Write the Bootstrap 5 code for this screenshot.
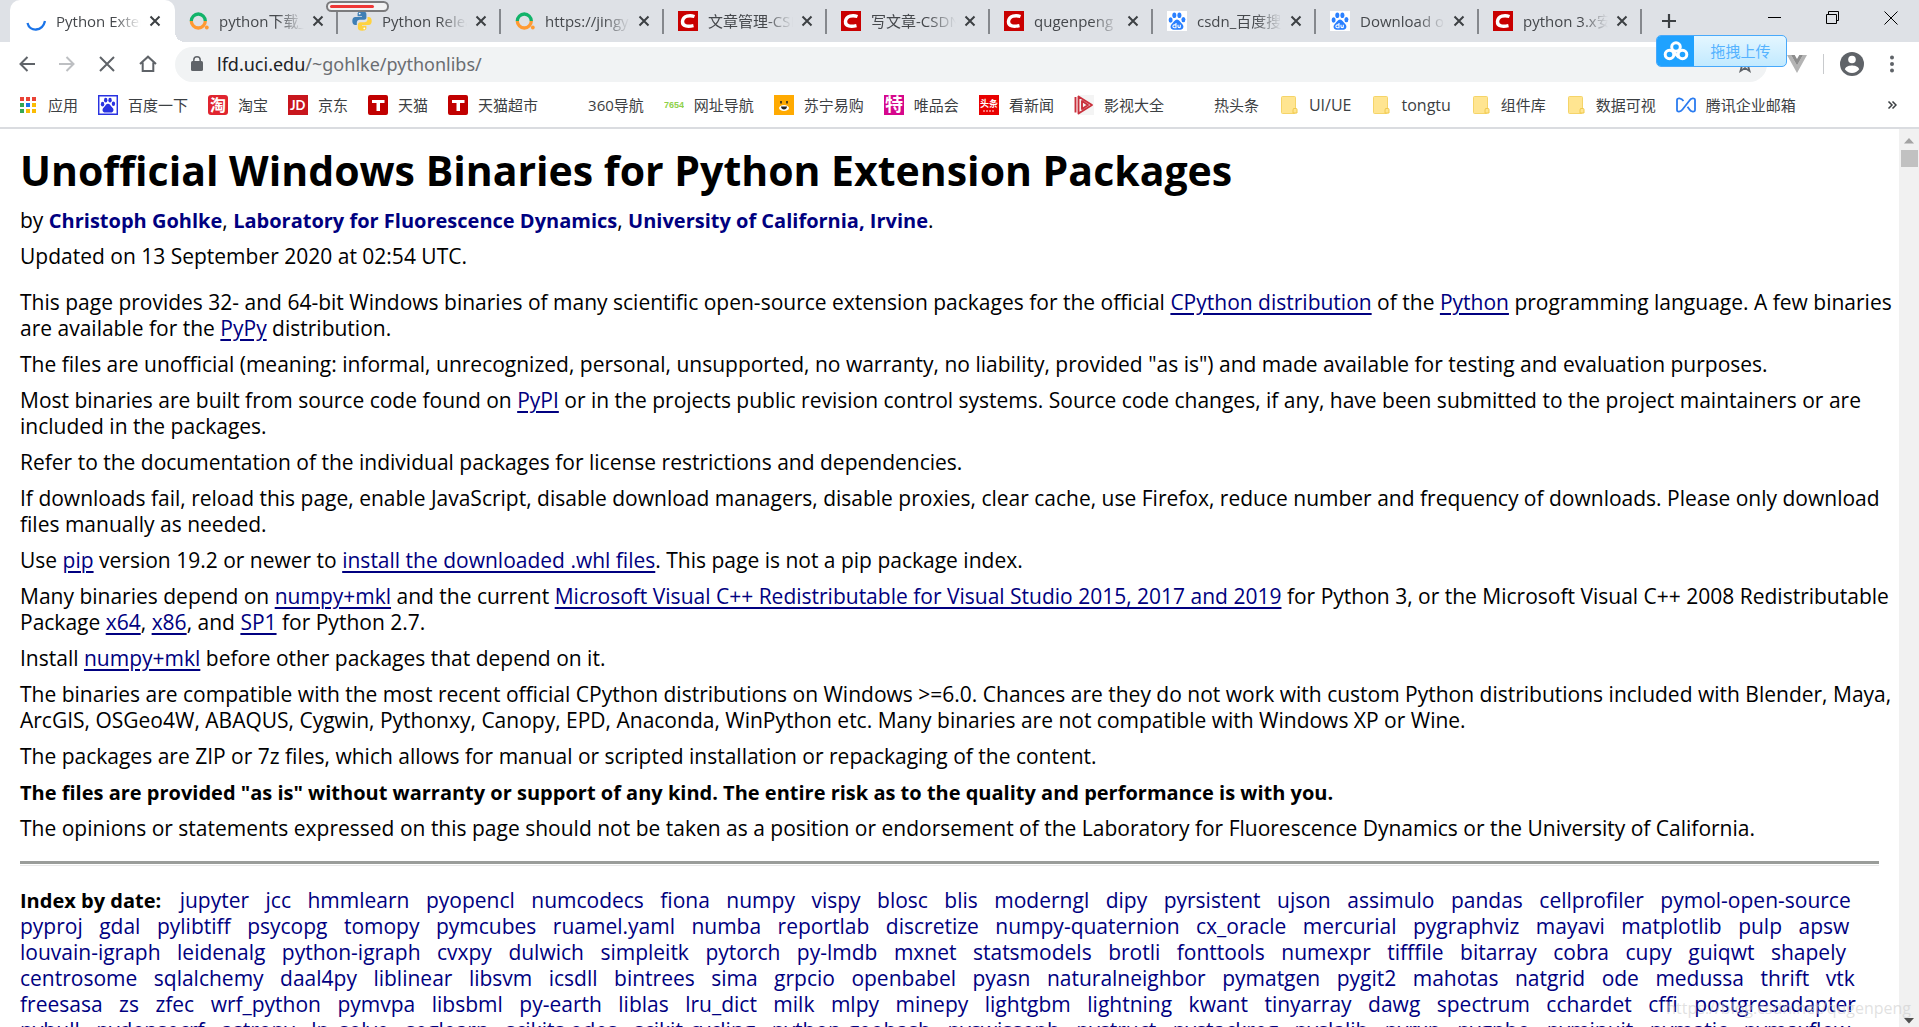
<!DOCTYPE html>
<html lang="en">
<head>
<meta charset="utf-8">
<meta name="viewport" content="width=device-width, initial-scale=1">
<title>Python Extension Packages for Windows - Christoph Gohlke</title>
<link href="https://cdn.jsdelivr.net/npm/bootstrap@5.3.0/dist/css/bootstrap.min.css" rel="stylesheet">
<style>
  body { font-family: "Open Sans", "Noto Sans CJK SC", sans-serif; color: #000; background: #fff; }
  svg { display: block; flex: none; }
  button { border: 0; background: none; padding: 0; color: inherit; }

  /* tab strip */
  .tabstrip { height: 42px; background: #dee1e6; padding-left: 10px; font-size: 15px; color: #45484c; }
  .tabset { flex: 0 1 1632px; min-width: 0; }
  .btab { flex: 1 1 0; min-width: 0; height: 42px; padding: 0 14px 0 14px; position: relative; }
  .btab .ttl { flex: 1 1 0; min-width: 0; margin: 0 8px 0 10px; white-space: nowrap; overflow: hidden; color: inherit; text-decoration: none;
    -webkit-mask-image: linear-gradient(90deg, #000 68%, transparent); mask-image: linear-gradient(90deg, #000 68%, transparent); }
  .btab + .btab::after { content: ""; width: 2px; height: 25px; background: #85888d; position: absolute; right: 0; top: 9px; }
  .btab.current { flex: 0 0 165px; background: #fff; border-radius: 10px 10px 0 0; padding-left: 16px; }
  .btab.current::after { content: ""; position: absolute; left: 100%; bottom: 0; width: 10px; height: 10px; background: radial-gradient(circle at 10px 0, transparent 10px, #fff 10px); }
  .newtab { flex: none; width: 54px; height: 42px; }
  .winctl { gap: 44px; padding: 0 21px 6px 0; }

  /* address bar */
  .toolbar { height: 45px; padding: 0 23px 1px 19px; }
  .navbtns { gap: 24px; width: 156px; }
  .omni { height: 35px; background: #f1f3f4; border-radius: 18px; padding: 0 12px 0 16px; font: 18px "Noto Sans", sans-serif; color: #6a6d71; }
  .omni b { font-weight: 400; color: #202124; }
  .omni .lockgap { margin-right: 14px; }
  .toolsep { width: 1px; height: 20px; background: #c8cacd; }

  /* bookmarks */
  .marks { height: 42px; border-bottom: 2px solid #dadce0; padding: 0 22px 4px 18px; gap: 20px; font-size: 15px; line-height: 20px; }
  .marks a { color: #3c4043; text-decoration: none; white-space: nowrap; gap: 10px; }
  .marks .latin { font-size: 16px; }
  .blankico { width: 20px; height: 20px; }

  /* document */
  .doc { padding: 14px 20px 0; font-size: 21px; line-height: 26px; white-space: nowrap; overflow: hidden; }
  .doc h1 { font-size: 41px; line-height: 54px; font-weight: 700; margin: 0 0 10px; }
  .doc p { margin: 0 0 10px; }
  .doc a { color: #000080; text-decoration-thickness: 2px; text-underline-offset: 3px; }
  .doc strong, .doc .byline a { font-size: 20px; font-weight: 700; line-height: 20px; }
  .byline a, .pkgs a { text-decoration: none; }
  .doc .stamp { margin-bottom: 20px; }
  .rule { height: 4px; margin: 20px 0 22px; border: solid #9a9d9a; border-width: 3px 0 0; opacity: 1; box-shadow: 0 1px #e8e8e8; }
  .pkgs a { margin-right: 11px; }
  .pkgs strong { margin-right: 13px; }

  /* scrollbar */
  .sbar { flex: 0 0 20px; background: #f1f1f1; padding: 9px 0 3px; }
  .sbar .thumb { width: 17px; height: 17px; background: #c1c1c1; margin-top: 6px; }

  /* overlays */
  .dropup { position: absolute; left: 1656px; top: 35px; width: 131px; height: 32px; border: 1px solid #48a9fb; border-radius: 5px; background: linear-gradient(#e4f6ff, #c2eaff); color: #55b3ff; font-size: 15px; overflow: hidden; }
  .dropup span { flex: 1; text-align: center; padding-left: 1px; }
  .dropup i { width: 37px; height: 32px; background: #1fa2ff; }
  .meter { position: absolute; left: 326px; top: 1px; width: 63px; height: 11px; border: 2px solid #7b7b7d; border-radius: 6px; background: #f2f2f3; padding: 2px; }
  .meter div { width: 44px; height: 3px; border-radius: 2px; background: #ee3636; }
  .wmark { position: absolute; right: 8px; bottom: 6px; font: 16px/26px "Open Sans", sans-serif; color: rgba(205, 205, 205, .6); }
</style>
<script src="https://cdn.jsdelivr.net/npm/bootstrap@5.3.0/dist/js/bootstrap.bundle.min.js"></script>
</head>
<body class="vh-100 d-flex flex-column overflow-hidden position-relative">

<svg width="0" height="0" class="position-absolute" aria-hidden="true">
  <symbol id="x" viewBox="0 0 12 12"><path d="M1.500 1.500 10.500 10.500M10.500 1.500 1.500 10.500" stroke="#3c4043" stroke-width="2" fill="none"/></symbol>
  <symbol id="csdn" viewBox="0 0 20 20"><path fill="#c90000" d="M0 0h20v20H0z"/><path d="M16.500 5.500C12 4 5 4.500 4.500 10.500 4.200 15.500 10 15.800 15.500 14.600" fill="none" stroke="#fff" stroke-width="3.400"/></symbol>
  <symbol id="paw" viewBox="0 0 20 20"><ellipse cx="3.600" cy="9" rx="2" ry="2.700"/><ellipse cx="7.300" cy="4.300" rx="2" ry="2.800"/><ellipse cx="12.400" cy="4.300" rx="2" ry="2.800"/><ellipse cx="16.400" cy="8.600" rx="2" ry="2.700"/><path d="M10 8.500c2.300 0 3 2.500 5 4.300 2.600 2.300 1.400 5.900-1.600 5.900H6.600c-3 0-4.200-3.600-1.600-5.900 2-1.800 2.700-4.300 5-4.300z"/></symbol>
  <symbol id="baidu" viewBox="0 0 20 20"><path fill="#fff" d="M0 0h20v20H0z"/><use href="#paw" fill="#2a80ff"/><path d="M9 12v4.800H7.300a1.400 1.400 0 0 1 0-2.900H9M11 13.800v1.800c0 1.300 2.300 1.300 2.300 0v-1.800 3" fill="none" stroke="#fff" stroke-width="1.100"/></symbol>
  <symbol id="ring" viewBox="0 0 20 20"><path d="M2.300 10a7 7 0 1 1 14 0" fill="none" stroke="#12b36a" stroke-width="3.300"/><path d="M2.300 10a7 7 0 0 0 14 0" fill="none" stroke="#ff9a32" stroke-width="3.300"/><circle cx="17.800" cy="16.500" r="1.900" fill="#ff9a32"/></symbol>
  <symbol id="tmall" viewBox="0 0 20 20"><rect width="20" height="20" rx="2" fill="#c10000"/><path d="M4 5h12.500v3H12v8H8.500V8H4z" fill="#fff"/></symbol>
  <symbol id="folder" viewBox="0 0 20 20"><rect x="2.500" y="1.500" width="14" height="17" rx="1" fill="#ffe591" stroke="#f5d469"/><path d="M14.500 13.500h2.500a1 1 0 0 1 1 1V18h-4v-3z" fill="#ffe591" stroke="#f0c94d"/></symbol>
</svg>

<header>
  <div class="tabstrip d-flex align-items-center">
    <div class="tabset d-flex">
      <div class="btab current d-flex align-items-center">
        <svg width="20" height="20" viewBox="0 0 20 20"><path d="M1.500 12c2 9 15 9 17.500-2" fill="none" stroke="#1a73e8" stroke-width="2.300"/></svg>
        <a class="ttl" href="#">Python Extension</a><button aria-label="Close tab"><svg width="12" height="12"><use href="#x"/></svg></button>
      </div>
      <div class="btab d-flex align-items-center"><svg width="20" height="20"><use href="#ring"/></svg><a class="ttl" href="#">python下载_百度</a><button aria-label="Close tab"><svg width="12" height="12"><use href="#x"/></svg></button></div>
      <div class="btab d-flex align-items-center">
        <svg width="20" height="20" viewBox="0 0 20 20"><path d="M9.800.3C6 .3 5.600 2 5.600 3v2.200H10V6H3.200C1.500 6 .3 7.500.3 10c0 2.600 1.300 4 2.900 4h1.600v-2.200c0-1.700 1.300-3 3-3h4.400c1.200 0 2.200-1 2.200-2.300V3c0-1.600-1.500-2.700-4.600-2.700z" fill="#3f7fb5"/><path d="M10.200 19.700c3.800 0 4.200-1.700 4.200-2.700v-2.200H10V14h6.800c1.700 0 2.900-1.500 2.900-4 0-2.600-1.300-4-2.900-4h-1.300v2.200c0 1.700-1.300 3-3 3H8.100c-1.200 0-2.200 1-2.200 2.300V17c0 1.600 1.200 2.700 4.300 2.700z" fill="#ffd23f"/><circle cx="7.700" cy="2.600" r=".9" fill="#fff"/><circle cx="12.300" cy="17.400" r=".9" fill="#fff"/></svg>
        <a class="ttl" href="#">Python Release</a><button aria-label="Close tab"><svg width="12" height="12"><use href="#x"/></svg></button></div>
      <div class="btab d-flex align-items-center"><svg width="20" height="20"><use href="#ring"/></svg><a class="ttl" href="#">https://jingyan</a><button aria-label="Close tab"><svg width="12" height="12"><use href="#x"/></svg></button></div>
      <div class="btab d-flex align-items-center"><svg width="20" height="20"><use href="#csdn"/></svg><a class="ttl" href="#">文章管理-CSDN</a><button aria-label="Close tab"><svg width="12" height="12"><use href="#x"/></svg></button></div>
      <div class="btab d-flex align-items-center"><svg width="20" height="20"><use href="#csdn"/></svg><a class="ttl" href="#">写文章-CSDN</a><button aria-label="Close tab"><svg width="12" height="12"><use href="#x"/></svg></button></div>
      <div class="btab d-flex align-items-center"><svg width="20" height="20"><use href="#csdn"/></svg><a class="ttl" href="#">qugenpeng</a><button aria-label="Close tab"><svg width="12" height="12"><use href="#x"/></svg></button></div>
      <div class="btab d-flex align-items-center"><svg width="20" height="20"><use href="#baidu"/></svg><a class="ttl" href="#">csdn_百度搜索</a><button aria-label="Close tab"><svg width="12" height="12"><use href="#x"/></svg></button></div>
      <div class="btab d-flex align-items-center"><svg width="20" height="20"><use href="#baidu"/></svg><a class="ttl" href="#">Download or</a><button aria-label="Close tab"><svg width="12" height="12"><use href="#x"/></svg></button></div>
      <div class="btab d-flex align-items-center"><svg width="20" height="20"><use href="#csdn"/></svg><a class="ttl" href="#">python 3.x安装</a><button aria-label="Close tab"><svg width="12" height="12"><use href="#x"/></svg></button></div>
    </div>
    <button class="newtab d-flex align-items-center justify-content-center" aria-label="New tab"><svg width="16" height="16" viewBox="0 0 16 16"><path d="M8 1v14M1 8h14" stroke="#3c4043" stroke-width="2.200"/></svg></button>
    <div class="winctl d-flex align-items-center ms-auto">
      <button aria-label="Minimize"><svg width="14" height="14"><path d="M0 6.500h13" stroke="#000"/></svg></button>
      <button aria-label="Restore"><svg width="14" height="14"><path d="M.5 3.500h10v9H.5zM2.500 3V.5h10v9H11" fill="none" stroke="#000"/></svg></button>
      <button aria-label="Close"><svg width="14" height="14"><path d="M.5.5l13 13M13.500.5l-13 13" stroke="#000"/></svg></button>
    </div>
  </div>

  <div class="toolbar d-flex align-items-center">
    <nav class="navbtns d-flex align-items-center">
      <button aria-label="Back"><svg width="16" height="16" viewBox="0 0 16 16"><path d="M16 8H1.500M8.500 1 1.500 8l7 7" fill="none" stroke="#5f6368" stroke-width="2"/></svg></button>
      <button aria-label="Forward"><svg width="16" height="16" viewBox="0 0 16 16"><path d="M0 8h14.500M7.500 1l7 7-7 7" fill="none" stroke="#bdbfc2" stroke-width="2"/></svg></button>
      <button aria-label="Stop"><svg width="16" height="16" viewBox="0 0 16 16"><path d="M1 1l14 14M15 1 1 15" stroke="#5f6368" stroke-width="2"/></svg></button>
      <button aria-label="Home"><svg width="18" height="18" viewBox="0 0 18 18"><path d="M1 9l8-7.300L17 9M3.700 7.500V16h10.600V7.500" fill="none" stroke="#5f6368" stroke-width="2"/></svg></button>
    </nav>
    <div class="omni d-flex align-items-center flex-grow-1">
      <svg class="lockgap" width="12" height="16" viewBox="0 0 12 16"><rect y="5" width="12" height="10" rx="1.500" fill="#5f6368"/><path d="M2.800 6V4a3.200 3.200 0 0 1 6.400 0v2" fill="none" stroke="#5f6368" stroke-width="1.500"/></svg>
      <span class="flex-grow-1"><b>lfd.uci.edu</b>/~gohlke/pythonlibs/</span>
      <button aria-label="Bookmark this page"><svg width="20" height="20" viewBox="0 0 20 20"><path d="M10 3l2 5h5l-4 3.500 1.500 5.500-4.500-3-4.500 3L7 11.500 3 8h5z" fill="none" stroke="#5f6368" stroke-width="1.800"/></svg></button>
    </div>
    <div class="d-flex align-items-center ps-3">
      <svg class="ms-1 me-3" width="20" height="18" viewBox="0 0 20 18"><path d="M0 0h4l6 10.500L16 0h4L10 18z" fill="#b4b4b4"/><path d="M4 0h3.700L10 4l2.300-4H16l-6 10.500z" fill="#8d8d8d"/></svg>
      <span class="toolsep me-3"></span>
      <button aria-label="Profile"><svg width="24" height="24" viewBox="0 0 24 24"><circle cx="12" cy="12" r="12" fill="#5f6368"/><circle cx="12" cy="7.500" r="3.800" fill="#fff"/><path d="M4.800 17.300c1-3.200 5-3.800 7.200-3.800s6.200.6 7.200 3.800A9 9 0 0 1 12 21a9 9 0 0 1-7.200-3.700z" fill="#fff"/></svg></button>
      <button class="ms-4" aria-label="Menu"><svg width="8" height="18"><circle cx="4" cy="2.500" r="2" fill="#5f6368"/><circle cx="4" cy="9" r="2" fill="#5f6368"/><circle cx="4" cy="15.500" r="2" fill="#5f6368"/></svg></button>
    </div>
  </div>

  <nav class="marks d-flex align-items-center">
    <a class="d-flex" href="#"><svg width="20" height="20"><path fill="#ea4335" d="M2 2h4v4H2zM8 2h4v4H8zM14 2h4v4h-4z"/><path fill="#34a853" d="M2 8h4v4H2zM2 14h4v4H2z"/><path fill="#1a73e8" d="M8 8h4v4H8z"/><path fill="#fbbc04" d="M14 8h4v4h-4zM8 14h4v4H8zM14 14h4v4h-4z"/></svg>应用</a>
    <a class="d-flex" href="#"><svg width="20" height="20" viewBox="0 0 20 20"><path fill="#fff" stroke="#2932e1" stroke-width="1.500" d="M.7.7h18.600v18.600H.7z"/><use href="#paw" fill="#2932e1" transform="translate(1.500 1.500) scale(.85)"/></svg>百度一下</a>
    <a class="d-flex" href="#"><svg width="20" height="20"><rect width="20" height="20" rx="3" fill="#e0252f"/><text x="2" y="16" font-size="16" font-weight="700" fill="#fff">淘</text></svg>淘宝</a>
    <a class="d-flex" href="#"><svg width="20" height="20"><path fill="#c8161d" d="M0 0h20v20H0z"/><text x="2" y="15" font-size="13" font-family="Lato" font-weight="700" fill="#fff">JD</text></svg>京东</a>
    <a class="d-flex" href="#"><svg width="20" height="20"><use href="#tmall"/></svg>天猫</a>
    <a class="d-flex" href="#"><svg width="20" height="20"><use href="#tmall"/></svg>天猫超市</a>
    <a class="d-flex" href="#"><span class="blankico"></span>360导航</a>
    <a class="d-flex" href="#"><svg width="20" height="20"><text x="0" y="13" font-size="9" font-weight="600" fill="#8fd14a" font-family="Liberation Sans">7654</text></svg>网址导航</a>
    <a class="d-flex" href="#"><svg width="20" height="20"><path fill="#ffaa01" d="M0 0h20v20H0z"/><path d="M7 6v2.500M13 6v2.500" stroke="#222" stroke-width="1.500"/><ellipse cx="10" cy="13" rx="5" ry="3" fill="#fff"/><path d="M7 11.500h6c0 4-6 4-6 0z" fill="#222"/></svg>苏宁易购</a>
    <a class="d-flex" href="#"><svg width="20" height="20"><path fill="#d6078c" d="M0 0h20v20H0z"/><text x="1" y="16" font-size="18" font-weight="700" fill="#fff">特</text></svg>唯品会</a>
    <a class="d-flex" href="#"><svg width="20" height="20"><path fill="#e90000" d="M0 0h20v20H0z"/><text x="1" y="12" font-size="9" font-weight="700" fill="#fff">头条</text><path d="M4 16h12" stroke="#ff9c9c" stroke-width="1.500" stroke-dasharray="2 1"/></svg>看新闻</a>
    <a class="d-flex" href="#"><svg width="20" height="20"><path fill="#f4f4f4" d="M4 0h16v20H4z"/><path d="M1.500 2v15.500M4.500 1.500v17L18 10zM8 6v8l6-4z" fill="none" stroke="#c9303c" stroke-width="1.900" stroke-linejoin="round"/></svg>影视大全</a>
    <a class="d-flex" href="#"><span class="blankico"></span>热头条</a>
    <a class="d-flex latin" href="#"><svg width="20" height="20"><use href="#folder"/></svg>UI/UE</a>
    <a class="d-flex latin" href="#"><svg width="20" height="20"><use href="#folder"/></svg>tongtu</a>
    <a class="d-flex" href="#"><svg width="20" height="20"><use href="#folder"/></svg>组件库</a>
    <a class="d-flex" href="#"><svg width="20" height="20"><use href="#folder"/></svg>数据可视</a>
    <a class="d-flex" href="#"><svg width="20" height="20"><path d="M7.500 6C5.500 3 1 2.500 1 5v10c0 2.500 3.500 2 5.500-.5L13.500 5.500C15 3 19 2.500 19 5v10c0 2.500-4 2-5.500-.5l-2-2.800" fill="none" stroke="#2b7cf0" stroke-width="1.800"/></svg>腾讯企业邮箱</a>
    <button class="ms-auto" aria-label="More bookmarks"><svg width="10" height="8"><path d="M1.500.5 5 4 1.500 7.500M5.500.5 9 4 5.500 7.500" fill="none" stroke="#3c4043" stroke-width="1.500"/></svg></button>
  </nav>
</header>

<div class="d-flex flex-grow-1 overflow-hidden">
  <main class="doc flex-grow-1">
    <h1>Unofficial Windows Binaries for Python Extension Packages</h1>
    <p class="byline">by <a href="#">Christoph Gohlke</a>, <a href="#">Laboratory for Fluorescence Dynamics</a>, <a href="#">University of California, Irvine</a>.</p>
    <p class="stamp">Updated on 13 September 2020 at 02:54 UTC.</p>
    <p>This page provides 32- and 64-bit Windows binaries of many scientific open-source extension packages for the official <a href="#">CPython distribution</a> of the <a href="#">Python</a> programming language. A few binaries<br>are available for the <a href="#">PyPy</a> distribution.</p>
    <p>The files are unofficial (meaning: informal, unrecognized, personal, unsupported, no warranty, no liability, provided "as is") and made available for testing and evaluation purposes.</p>
    <p>Most binaries are built from source code found on <a href="#">PyPI</a> or in the projects public revision control systems. Source code changes, if any, have been submitted to the project maintainers or are<br>included in the packages.</p>
    <p>Refer to the documentation of the individual packages for license restrictions and dependencies.</p>
    <p>If downloads fail, reload this page, enable JavaScript, disable download managers, disable proxies, clear cache, use Firefox, reduce number and frequency of downloads. Please only download<br>files manually as needed.</p>
    <p>Use <a href="#">pip</a> version 19.2 or newer to <a href="#">install the downloaded .whl files</a>. This page is not a pip package index.</p>
    <p>Many binaries depend on <a href="#">numpy+mkl</a> and the current <a href="#">Microsoft Visual C++ Redistributable for Visual Studio 2015, 2017 and 2019</a> for Python 3, or the Microsoft Visual C++ 2008 Redistributable<br>Package <a href="#">x64</a>, <a href="#">x86</a>, and <a href="#">SP1</a> for Python 2.7.</p>
    <p>Install <a href="#">numpy+mkl</a> before other packages that depend on it.</p>
    <p>The binaries are compatible with the most recent official CPython distributions on Windows &gt;=6.0. Chances are they do not work with custom Python distributions included with Blender, Maya,<br>ArcGIS, OSGeo4W, ABAQUS, Cygwin, Pythonxy, Canopy, EPD, Anaconda, WinPython etc. Many binaries are not compatible with Windows XP or Wine.</p>
    <p>The packages are ZIP or 7z files, which allows for manual or scripted installation or repackaging of the content.</p>
    <p><strong>The files are provided "as is" without warranty or support of any kind. The entire risk as to the quality and performance is with you.</strong></p>
    <p>The opinions or statements expressed on this page should not be taken as a position or endorsement of the Laboratory for Fluorescence Dynamics or the University of California.</p>
    <hr class="rule">
    <p class="pkgs"><strong>Index by date:</strong> <a href="#">jupyter</a> <a href="#">jcc</a> <a href="#">hmmlearn</a> <a href="#">pyopencl</a> <a href="#">numcodecs</a> <a href="#">fiona</a> <a href="#">numpy</a> <a href="#">vispy</a> <a href="#">blosc</a> <a href="#">blis</a> <a href="#">moderngl</a> <a href="#">dipy</a> <a href="#">pyrsistent</a> <a href="#">ujson</a> <a href="#">assimulo</a> <a href="#">pandas</a> <a href="#">cellprofiler</a> <a href="#">pymol-open-source</a><br>
    <a href="#">pyproj</a> <a href="#">gdal</a> <a href="#">pylibtiff</a> <a href="#">psycopg</a> <a href="#">tomopy</a> <a href="#">pymcubes</a> <a href="#">ruamel.yaml</a> <a href="#">numba</a> <a href="#">reportlab</a> <a href="#">discretize</a> <a href="#">numpy-quaternion</a> <a href="#">cx_oracle</a> <a href="#">mercurial</a> <a href="#">pygraphviz</a> <a href="#">mayavi</a> <a href="#">matplotlib</a> <a href="#">pulp</a> <a href="#">apsw</a><br>
    <a href="#">louvain-igraph</a> <a href="#">leidenalg</a> <a href="#">python-igraph</a> <a href="#">cvxpy</a> <a href="#">dulwich</a> <a href="#">simpleitk</a> <a href="#">pytorch</a> <a href="#">py-lmdb</a> <a href="#">mxnet</a> <a href="#">statsmodels</a> <a href="#">brotli</a> <a href="#">fonttools</a> <a href="#">numexpr</a> <a href="#">tifffile</a> <a href="#">bitarray</a> <a href="#">cobra</a> <a href="#">cupy</a> <a href="#">guiqwt</a> <a href="#">shapely</a><br>
    <a href="#">centrosome</a> <a href="#">sqlalchemy</a> <a href="#">daal4py</a> <a href="#">liblinear</a> <a href="#">libsvm</a> <a href="#">icsdll</a> <a href="#">bintrees</a> <a href="#">sima</a> <a href="#">grpcio</a> <a href="#">openbabel</a> <a href="#">pyasn</a> <a href="#">naturalneighbor</a> <a href="#">pymatgen</a> <a href="#">pygit2</a> <a href="#">mahotas</a> <a href="#">natgrid</a> <a href="#">ode</a> <a href="#">medussa</a> <a href="#">thrift</a> <a href="#">vtk</a><br>
    <a href="#">freesasa</a> <a href="#">zs</a> <a href="#">zfec</a> <a href="#">wrf_python</a> <a href="#">pymvpa</a> <a href="#">libsbml</a> <a href="#">py-earth</a> <a href="#">liblas</a> <a href="#">lru_dict</a> <a href="#">milk</a> <a href="#">mlpy</a> <a href="#">minepy</a> <a href="#">lightgbm</a> <a href="#">lightning</a> <a href="#">kwant</a> <a href="#">tinyarray</a> <a href="#">dawg</a> <a href="#">spectrum</a> <a href="#">cchardet</a> <a href="#">cffi</a> <a href="#">postgresadapter</a><br>
    <a href="#">pyhull</a> <a href="#">pydensecrf</a> <a href="#">astropy</a> <a href="#">lp_solve</a> <a href="#">seglearn</a> <a href="#">scikits.odes</a> <a href="#">scikit-cycling</a> <a href="#">python-geohash</a> <a href="#">pyswisseph</a> <a href="#">pystruct</a> <a href="#">pystackreg</a> <a href="#">pyslalib</a> <a href="#">pyrxp</a> <a href="#">pygpbo</a> <a href="#">pyminuit</a> <a href="#">pymatic</a> <a href="#">pymaxflow</a></p>
  </main>
  <div class="sbar d-flex flex-column align-items-center">
    <svg width="10" height="6"><path d="M0 5.500 5 0l5 5.500z" fill="#a3a3a3"/></svg>
    <div class="thumb"></div>
    <svg class="mt-auto" width="10" height="6"><path d="M0 0h10L5 5.500z" fill="#505050"/></svg>
  </div>
</div>

<div class="meter"><div></div></div>
<div class="dropup d-flex align-items-center">
  <i class="d-flex align-items-center justify-content-center"><svg width="26" height="20" viewBox="0 0 26 20"><g fill="none" stroke="#fff" stroke-width="3"><circle cx="13" cy="6" r="4.300"/><circle cx="6.500" cy="13.500" r="4.300"/><circle cx="19.500" cy="13.500" r="4.300"/><path d="M10 10.500l6 6"/></g></svg></i>
  <span>拖拽上传</span>
</div>
<div class="wmark">https://blog.csdn.net/qugenpeng</div>
</body>
</html>
